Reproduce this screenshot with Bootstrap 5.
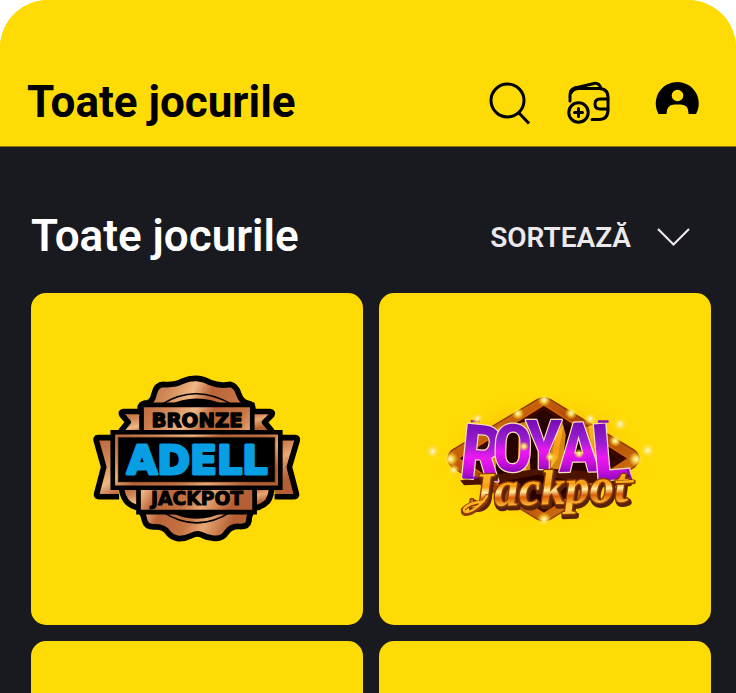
<!DOCTYPE html>
<html lang="ro">
<head>
<meta charset="utf-8">
<meta name="viewport" content="width=device-width, initial-scale=1">
<title>Toate jocurile</title>
<link href="https://cdn.jsdelivr.net/npm/bootstrap@5.3.0/dist/css/bootstrap.min.css" rel="stylesheet">
<style>
body { font-family: Roboto, "Liberation Sans", sans-serif; background: #fff; }
.app-shell { background: linear-gradient(#ffdb05 100px, #191a1f 100px); border-radius: 48px 48px 0 0; }
.app-header { background: #ffdb05; padding: 77px 36px 19px 27px; border-bottom: 1px solid #8a780c; }
.app-title { font-size: 44px; line-height: 50px; }
.header-actions { gap: 36px; }
.games { padding: 64px 25px 0 31px; scrollbar-width: none; }
.games-head { margin-bottom: 32px; padding-right: 20px; }
.games-title { font-size: 44px; line-height: 50px; font-weight: 600; }
.sort-btn { color: #ece8ec; font-size: 28px; line-height: 46px; font-weight: 600; gap: 24px; }
.sort-btn:hover { color: #fff; }
.game-tile { background: #ffdb05; border-radius: 15px; }
.logo-adell { width: 68%; }
.logo-royal { width: 75%; }
.t-badge { font-family: "DejaVu Sans", sans-serif; font-weight: 700; }
.t-royal { font-family: "Liberation Sans Narrow", "Roboto Condensed", "Open Sans", sans-serif; font-weight: 700; }
.t-script { font-family: "Liberation Serif", serif; font-weight: 700; font-style: italic; }
</style>
</head>
<body>
<div class="app-shell vh-100 d-flex flex-column overflow-hidden">
  <header class="app-header d-flex align-items-center justify-content-between">
    <h1 class="app-title fw-bold text-black m-0">Toate jocurile</h1>
    <nav class="header-actions d-flex align-items-center" aria-label="Cont">
      <button type="button" class="btn p-0 border-0 d-flex" aria-label="Caută">
        <svg width="44" height="50" viewBox="0 0 44 50" fill="none" stroke="#000" stroke-width="3"><circle cx="20.500" cy="23.500" r="16.500"/><path d="M31.500 35.500l10.500 11"/></svg>
      </button>
      <button type="button" class="btn p-0 border-0 d-flex me-2" aria-label="Portofel">
        <svg width="44" height="50" viewBox="0 0 44 50" fill="none" stroke="#000" stroke-width="3" stroke-linecap="round" stroke-linejoin="round"><path d="M3 24V19q0-6 5-8L27 6.500q5-1 7 5M4 14q3-2.500 6-2.500h22q9 0 9 9v12q0 10-9 10h-7"/><path d="M4 15q2-4 8-4" stroke-width="4"/><circle cx="11.500" cy="35.500" r="9.700"/><path d="M11.500 31.500v8M7.500 35.500h8"/><path d="M41 22H33q-5 0-5 5t5 5h8"/></svg>
      </button>
      <button type="button" class="btn p-0 border-0 d-flex" aria-label="Profil">
        <svg width="45" height="50" viewBox="0 0 45 50"><path fill="#000" d="M3.500 37A21.500 21.500 0 1 1 41 37H33.500Q34 28 26 27.500H19Q11.500 28 11.500 37Z"/><circle cx="22.500" cy="18.500" r="5.800" fill="#ffdb05"/></svg>
      </button>
    </nav>
  </header>

  <main class="games flex-grow-1 overflow-auto">
    <div class="games-head d-flex align-items-end justify-content-between">
      <h2 class="games-title text-white m-0">Toate jocurile</h2>
      <button type="button" class="sort-btn btn p-0 border-0 d-flex align-items-center">SORTEAZĂ
        <svg width="36" height="20" viewBox="0 0 36 20" fill="none" stroke="#ece8ec" stroke-width="2.200"><path d="M3 1L18.500 16.500 34 1"/></svg>
      </button>
    </div>

    <div class="row row-cols-2 g-3">
      <div class="col">
        <a href="#adell" class="game-tile ratio ratio-1x1 d-block text-decoration-none" aria-label="Adell Bronze Jackpot">
          <span class="d-flex align-items-center justify-content-center">
            <svg class="logo-adell" viewBox="0 0 675 570">
              <defs>
                <linearGradient id="bronze" x1="0" y1="0" x2="1" y2=".6">
                  <stop offset="0" stop-color="#b96539"/><stop offset=".22" stop-color="#d18a58"/><stop offset=".38" stop-color="#f0b785"/><stop offset=".5" stop-color="#ba6439"/><stop offset=".7" stop-color="#c67443"/><stop offset=".82" stop-color="#e9a774"/><stop offset="1" stop-color="#b55f34"/>
                </linearGradient>
              </defs>
              <g fill="url(#bronze)" stroke="#000" stroke-width="17" stroke-linejoin="round">
                <path d="M168 128Q175 116 190 116Q205 113 210 88Q216 62 238 61Q270 64 295 51Q315 42 337 43Q360 45 379 56Q405 67 438 61Q455 65 462 88Q471 113 488 117Q505 120 505 134V430Q505 438 498 447Q493 458 493 470Q490 487 465 486Q440 484 427 503Q413 525 387 521Q365 519 350 510Q337 505 322 513Q303 523 282 522Q262 519 250 503Q238 486 213 487Q186 489 181 468Q179 450 167 438Z"/>
                <path d="M170 142H118Q108 143 114 153L132 174 112 198Q107 208 118 208H170M505 142H555Q567 143 561 153L540 174 560 198Q567 208 555 208H505"/>
                <path d="M92 220H42Q34 220 37 230L59 308 38 388Q36 397 48 397H105M583 220H631Q640 220 637 230L614 308 635 388Q637 397 626 397H570"/>
                <path d="M112 370Q115 400 132 416 145 427 168 432V370M508 370V432Q535 427 550 410 560 394 562 370"/>
              </g>
              <g fill="none" stroke="#000"><path stroke-width="5" d="M232 121Q284 88 337 89T442 121M232 440Q284 475 337 475T442 440"/></g>
              <path d="M250 124Q293 103 337 103T424 124ZM248 438Q293 463 337 463T426 438Z"/>
              <g fill="url(#bronze)" stroke="#000">
                <path stroke-width="14" d="M172 122H503V205H172ZM163 368H510V443H163Z"/>
                <path stroke-width="14" d="M86 204H587V370H86Z"/>
              </g>
              <path d="M102 219H571V353H102Z" stroke="#56341f" stroke-width="2"/>
              <g class="t-badge" text-anchor="middle" stroke-linejoin="round">
                <text x="338" y="188" font-size="59" stroke="#000" stroke-width="4">BRONZE</text>
                <text x="338" y="329" font-size="118" fill="#079ee3" stroke="#079ee3" stroke-width="9">ADELL</text>
                <text x="338" y="423" font-size="56" stroke="#000" stroke-width="3">JACKPOT</text>
              </g>
            </svg>
          </span>
        </a>
      </div>
      <div class="col">
        <a href="#royal" class="game-tile ratio ratio-1x1 d-block text-decoration-none" aria-label="Royal Jackpot">
          <span class="d-flex align-items-center justify-content-center">
            <svg class="logo-royal" viewBox="0 -3 750 450">
              <defs>
                <linearGradient id="violet" x1="0" y1="0" x2="0" y2="1"><stop offset=".15" stop-color="#7409b3"/><stop offset=".4" stop-color="#9a1fd0"/><stop offset=".55" stop-color="#ec18f2"/><stop offset=".68" stop-color="#cc10e0"/><stop offset=".82" stop-color="#8508b4"/></linearGradient>
                <linearGradient id="gold" gradientUnits="userSpaceOnUse" x1="0" y1="100" x2="0" y2="285"><stop offset="0" stop-color="#ffc52c"/><stop offset=".5" stop-color="#f49a13"/><stop offset="1" stop-color="#ffdf4e"/></linearGradient>
                <linearGradient id="script" x1="0" y1="0" x2="0" y2="1"><stop offset=".15" stop-color="#ffc52c"/><stop offset=".45" stop-color="#f79d13"/><stop offset=".55" stop-color="#fff0a0"/><stop offset=".66" stop-color="#d95e08"/><stop offset=".82" stop-color="#ffc23a"/></linearGradient>
                <linearGradient id="frame" x1="0" y1="0" x2="1" y2="1"><stop offset="0" stop-color="#e98c0c"/><stop offset=".5" stop-color="#a33a05"/><stop offset="1" stop-color="#ed9a16"/></linearGradient>
                <radialGradient id="glow"><stop offset="0" stop-color="#fffbd8"/><stop offset=".35" stop-color="#ffe36a" stop-opacity=".9"/><stop offset="1" stop-color="#ffd500" stop-opacity="0"/></radialGradient>
                <radialGradient id="haze"><stop offset=".6" stop-color="#f3a900" stop-opacity=".5"/><stop offset="1" stop-color="#ffdb05" stop-opacity="0"/></radialGradient>
              </defs>
              <ellipse cx="370" cy="225" rx="325" ry="210" fill="url(#haze)"/>
              <path d="M350 44Q370 33 390 44L642 196Q672 221 642 248L390 404Q370 415 350 404L94 248Q68 221 94 196Z" fill="url(#frame)" stroke="#8f3805" stroke-width="4"/>
              <path d="M370 60L625 221 370 388 112 221Z" fill="#3b0800" stroke="#d16309" stroke-width="5"/>
              <path d="M370 76L590 221 370 365 145 221Z" fill="#290300"/>
              <!-- side faces of the letters -->
              <g><path fill="#d7870e" d="M215 145L239 120 225 250 195 270 198 225ZM295 115L322 110 330 265 290 280ZM425 110L436 150 424 270 390 260 388 205ZM490 130L539 110 575 270 525 250Z"/><path fill="url(#gold)" d="M299 160L320 140 316 275 296 240ZM405 150L429 120 412 220 390 250ZM505 125L535 112 560 250 520 245Z"/></g>
              <path fill="#4c1300" d="M118 288L220 270 370 250 530 263 633 285 620 307 480 292 350 270 210 298 130 302Z"/>
              <g class="t-royal" stroke-linejoin="round" paint-order="stroke" fill="url(#violet)" stroke="#ffe2bc" stroke-width="7">
                <text font-size="230" transform="translate(111 278) rotate(6)">R</text>
                <text font-size="200" transform="translate(214 258) rotate(2)">O</text>
                <text font-size="206" x="314" y="254">Y</text>
                <text font-size="208" transform="translate(414 262) rotate(-1)">A</text>
                <text font-size="240" transform="translate(522 290) rotate(-5)">L</text>
              </g>
              <path d="M150 109h28M126 279h42M533 110h32M622 254l12 33" fill="none" stroke="#8a0dbb" stroke-width="7"/>
              <g class="t-script" text-anchor="middle" font-size="148" stroke-linejoin="round">
                <text transform="translate(390 367) rotate(-2)" fill="#58230a" stroke="#58230a" stroke-width="14">Jackpot</text>
                <text transform="translate(386 359) rotate(-2)" fill="url(#script)" stroke="#8d3906" stroke-width="8" paint-order="stroke">Jackpot</text>
              </g>
              <path d="M189 353Q140 357 127 376 125 396 155 382 183 367 199 336M590 294L640 292" fill="none" stroke="#8d3906" stroke-width="14" stroke-linecap="round"/>
              <path d="M189 351Q140 355 129 375 130 389 153 378 182 362 199 334M590 292L638 290" fill="none" stroke="#ffb31e" stroke-width="7" stroke-linecap="round"/>
              <g fill="url(#glow)"><circle cx="371" cy="45" r="20"/><circle cx="292" cy="86" r="19"/><circle cx="452" cy="85" r="19"/><circle cx="170" cy="101" r="20"/><circle cx="510" cy="102" r="22"/><circle cx="600" cy="118" r="24"/><circle cx="585" cy="168" r="19"/><circle cx="683" cy="197" r="25"/><circle cx="648" cy="224" r="23"/><circle cx="89" cy="223" r="23"/><circle cx="98" cy="256" r="18"/><circle cx="35" cy="200" r="25"/><circle cx="371" cy="405" r="22"/><circle cx="310" cy="185" r="15"/><circle cx="389" cy="217" r="15"/><circle cx="476" cy="207" r="15"/></g>
            </svg>
          </span>
        </a>
      </div>
      <div class="col"><a href="#joc-3" class="game-tile ratio ratio-1x1 d-block" aria-label="Joc 3"></a></div>
      <div class="col"><a href="#joc-4" class="game-tile ratio ratio-1x1 d-block" aria-label="Joc 4"></a></div>
    </div>
  </main>
</div>
<script src="https://cdn.jsdelivr.net/npm/bootstrap@5.3.0/dist/js/bootstrap.bundle.min.js"></script>
</body>
</html>
